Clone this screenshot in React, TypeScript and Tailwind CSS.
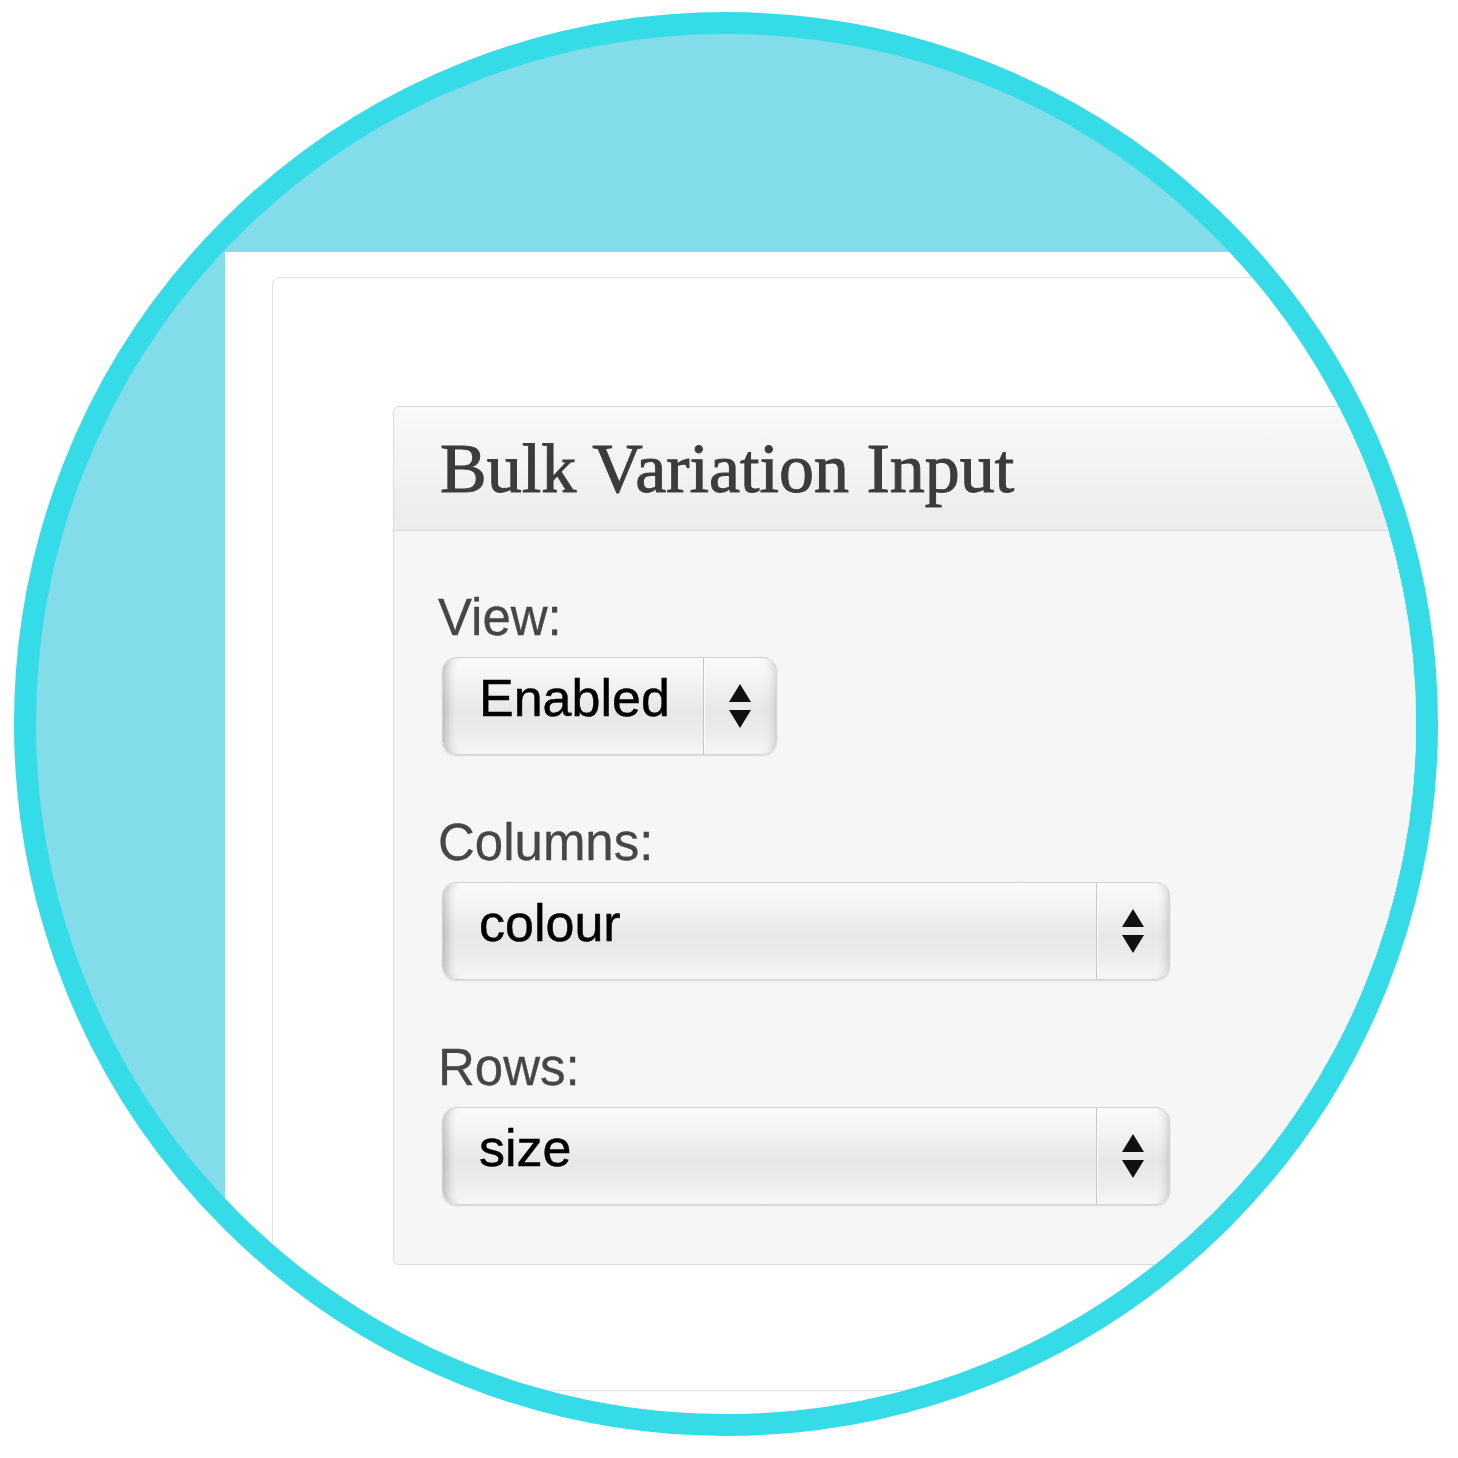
import React from 'react';

function Arrows() {
  return (
    <svg width="24" height="46" viewBox="0 0 24 46" fill="#111">
      <path d="M12 1 L23 19 L1 19 Z" />
      <path d="M1 27 L23 27 L12 45 Z" />
    </svg>
  );
}

function Select({ value, className }: { value: string; className: string }) {
  return (
    <div
      className={`ml-[4px] flex h-[98px] rounded-[14px] border border-[#d2d2d2] bg-[linear-gradient(to_bottom,#fbfbfb_0%,#f1f1f1_30%,#e7e7e7_55%,#ededed_80%,#f7f7f7_100%)] shadow-[inset_14px_0_10px_-10px_rgba(0,0,0,0.22),inset_-12px_0_10px_-10px_rgba(0,0,0,0.16),0_1px_2px_rgba(0,0,0,0.12)] ${className}`}
    >
      <div className="flex flex-1 items-center pb-[16px] pl-[36px] font-['Liberation_Sans',Arial,sans-serif] text-[52px] leading-none text-black [-webkit-text-stroke:0.5px_#000]">
        {value}
      </div>
      <div className="flex w-[73px] items-center justify-center border-l border-[#c6c6c6] shadow-[inset_1px_0_0_#ffffff]">
        <Arrows />
      </div>
    </div>
  );
}

function Field({ label, value, className }: { label: string; value: string; className: string }) {
  return (
    <div className="flex flex-col">
      <div className="mb-[11px] font-['Liberation_Sans',Arial,sans-serif] text-[51px] leading-[57px] text-[#464646] [-webkit-text-stroke:0.3px_#464646]">
        {label}
      </div>
      <Select value={value} className={className} />
    </div>
  );
}

export default function App() {
  return (
    <div className="h-[1458px] w-[1458px] overflow-hidden bg-white pl-[14px] pt-[12px]">
      {/* circular frame */}
      <div className="h-[1424px] w-[1424px] overflow-hidden rounded-full border-[22px] border-[#36dbe8] bg-[#83dcea]">
        <div className="pl-[189px] pt-[218px]">
          {/* admin page */}
          <div className="h-[1300px] w-[1500px] bg-white pl-[47px] pt-[25px]">
            <div className="h-[1114px] w-[1400px] rounded-[8px] border border-[#e2e2e2] pl-[120px] pt-[128px]">
              {/* postbox */}
              <div className="w-[1400px] rounded-[6px] border border-[#dadada] bg-[#f6f6f6]">
                <div className="h-[124px] rounded-t-[6px] border-b border-[#dcdcdc] bg-[linear-gradient(to_bottom,#f9f9f9,#ececec)] pl-[46px] pt-[24px]">
                  <h3 className="font-['Liberation_Serif',Georgia,serif] text-[70px] leading-[76px] text-[#3c3c3c] [-webkit-text-stroke:1px_#3c3c3c] [text-shadow:0_1px_0_#ffffff]">
                    Bulk Variation Input
                  </h3>
                </div>
                <div className="flex flex-col gap-[59px] pb-[59px] pl-[44px] pt-[58px]">
                  <Field label="View:" value="Enabled" className="w-[335px]" />
                  <Field label="Columns:" value="colour" className="w-[728px]" />
                  <Field label="Rows:" value="size" className="w-[728px]" />
                </div>
              </div>
            </div>
          </div>
        </div>
      </div>
    </div>
  );
}
